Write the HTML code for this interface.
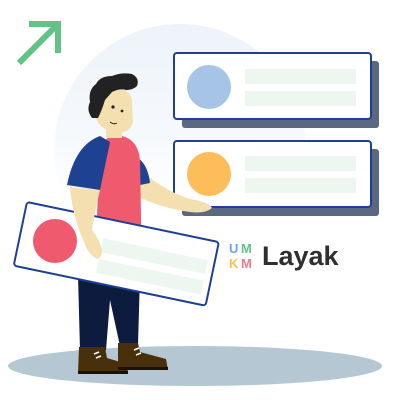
<!DOCTYPE html>
<html><head><meta charset="utf-8"><style>
html,body{margin:0;padding:0;background:#fff;width:400px;height:400px;overflow:hidden}
</style></head><body>
<svg width="400" height="400" viewBox="0 0 400 400" xmlns="http://www.w3.org/2000/svg">
<defs>
<linearGradient id="bg" x1="0" y1="0" x2="0" y2="1">
<stop offset="0" stop-color="#edf3f9"/><stop offset="0.45" stop-color="#f6f9fc"/><stop offset="0.7" stop-color="#ffffff"/>
</linearGradient>
</defs>
<circle cx="180" cy="150" r="126" fill="url(#bg)"/>
<!-- arrow -->
<g stroke="#62c385" stroke-width="6" fill="none">
<line x1="19" y1="63" x2="57" y2="25"/>
<polyline points="29,24 58,24 58,53" stroke-linecap="butt"/>
</g>
<!-- floor -->
<ellipse cx="195" cy="366" rx="187" ry="20" fill="#b5c7d3"/>
<!-- card 1 -->
<rect x="182" y="61" width="197" height="67" rx="3" fill="#5a6882"/>
<rect x="174" y="53" width="197" height="66" rx="3" fill="#fff" stroke="#1f3f94" stroke-width="2"/>
<circle cx="209" cy="87" r="22" fill="#a6c4e6"/>
<rect x="245" y="69" width="111" height="15" fill="#edf6ef"/>
<rect x="245" y="91" width="111" height="15" fill="#edf6ef"/>
<!-- card 2 -->
<rect x="182" y="149" width="197" height="67" rx="3" fill="#5a6882"/>
<rect x="174" y="141" width="197" height="66" rx="3" fill="#fff" stroke="#1f3f94" stroke-width="2"/>
<circle cx="209" cy="174" r="22" fill="#fcbd5a"/>
<rect x="245" y="156" width="111" height="15" fill="#edf6ef"/>
<rect x="245" y="178" width="111" height="15" fill="#edf6ef"/>
<!-- legs -->
<path d="M78 275 L140 275 L138 345 L120 346 L110 300 L106 350 L80 350 Z" fill="#0d1b3e"/>
<!-- boots -->
<path d="M79 347 L105 347 L107 358 L127 364 L128 374 L78 374 Z" fill="#47300b"/>
<path d="M118 343 L138 343 L140 352 L166 359 L168 370 L118 370 Z" fill="#47300b"/>
<rect x="78" y="371" width="50" height="3" fill="#1a1206"/>
<rect x="118" y="367" width="50" height="3" fill="#1a1206"/>
<g stroke="#fff" stroke-width="1.5"><line x1="94" y1="354" x2="99" y2="352"/><line x1="96" y1="358" x2="101" y2="356"/><line x1="134" y1="350" x2="139" y2="348"/><line x1="136" y1="355" x2="141" y2="353"/></g>
<!-- right arm -->
<path d="M140 170 Q170 195 195 200 Q210 203 212 208 Q205 214 190 212 Q160 208 135 195 Z" fill="#f4dfb0"/>
<path d="M138 158 Q148 165 150 183 L140 185 Z" fill="#1f4191"/>
<!-- torso -->
<path d="M95 262 L100 145 Q110 133 122 136 Q138 140 140 160 L142 275 L92 275 Z" fill="#ef5a6f"/>
<!-- left sleeve -->
<path d="M100 136 Q75 145 67 185 L100 190 L110 142 Z" fill="#1f4191"/>
<!-- neck & head -->
<rect x="106" y="122" width="16" height="16" fill="#f4dfb0"/>
<path d="M95 95 Q96 88 112 88 Q130 88 132 100 L133 122 Q130 133 117 133 Q100 130 96 118 Q88 116 90 108 Z" fill="#f4dfb0"/>
<path d="M92 118 Q86 110 90 102 Q88 90 96 84 Q100 76 112 76 Q122 72 132 74 Q140 78 137 86 Q133 90 126 90 Q120 88 112 92 L105 100 Q102 110 98 118 Z" fill="#222"/>
<circle cx="113" cy="107" r="1.6" fill="#222"/><circle cx="122" cy="111" r="1.4" fill="#222"/>
<path d="M110 122 Q114 125 117 123" stroke="#222" stroke-width="1" fill="none"/>
<!-- card 3 rotated -->
<g transform="translate(27,202) rotate(11.8)">
<rect x="0" y="0" width="196" height="65" rx="3" fill="#fff" stroke="#1f3f94" stroke-width="2"/>
<rect x="82" y="20" width="107" height="14" fill="#edf6ef"/>
<rect x="82" y="41" width="107" height="14" fill="#edf6ef"/>
</g>
<circle cx="55" cy="241" r="22" fill="#ef5a6f"/>
<!-- left arm over card -->
<path d="M70 187 L100 190 Q94 215 92 230 Q100 240 102 250 Q102 258 97 259 Q88 254 84 242 Q72 215 70 187 Z" fill="#f4dfb0"/>
<!-- logo -->
<g font-family="Liberation Sans, sans-serif" font-weight="bold" font-size="13">
<text x="229" y="253" fill="#6aa3e6">U</text><text x="241" y="253" fill="#62c385" textLength="14">M</text>
<text x="229" y="268" fill="#f5c44a">K</text><text x="241" y="268" fill="#f07a8a" textLength="14">M</text>
</g>
<text x="262" y="265" font-family="Liberation Sans, sans-serif" font-weight="bold" font-size="27" fill="#2f2f2f">Layak</text>
</svg>
</body></html>
